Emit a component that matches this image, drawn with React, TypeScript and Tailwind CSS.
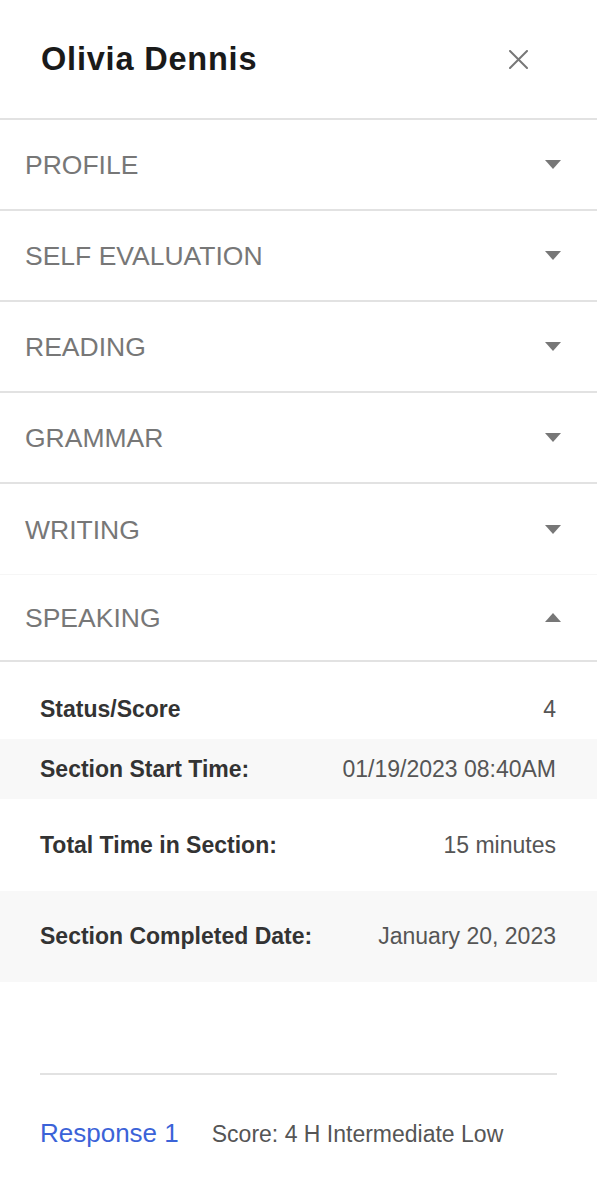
import { useState } from 'react';

const sections = ['PROFILE', 'SELF EVALUATION', 'READING', 'GRAMMAR', 'WRITING'];

const details = [
  { label: 'Status/Score', value: '4', h: 'h-[77px] pt-[18px]', shaded: false },
  { label: 'Section Start Time:', value: '01/19/2023 08:40AM', h: 'h-[60px]', shaded: true },
  { label: 'Total Time in Section:', value: '15 minutes', h: 'h-[92px]', shaded: false },
  { label: 'Section Completed Date:', value: 'January 20, 2023', h: 'h-[91px]', shaded: true },
];

function Caret({ up }: { up?: boolean }) {
  return (
    <svg width="16" height="9" viewBox="0 0 16 9" className="shrink-0">
      {up ? <path d="M8 0 L16 9 L0 9 Z" fill="#777" /> : <path d="M0 0 L16 0 L8 9 Z" fill="#777" />}
    </svg>
  );
}

export default function App() {
  const [open, setOpen] = useState('SPEAKING');

  return (
    <div className="min-h-screen w-full bg-white font-['Liberation_Sans',Arial,sans-serif]">
      <div className="flex h-[120px] items-center justify-between border-b-2 border-[#e2e2e2] pl-[41px] pr-[69px]">
        <h1 className="text-[32.5px] font-bold tracking-[0.8px] text-[#1a1a1a]">Olivia Dennis</h1>
        <button className="text-[#777]">
          <svg width="19" height="19" viewBox="0 0 19 19">
            <path d="M1 1 L18 18 M18 1 L1 18" stroke="#777" strokeWidth="2" strokeLinecap="round" />
          </svg>
        </button>
      </div>

      {sections.map((s, i) => (
        <button
          key={s}
          onClick={() => setOpen(open === s ? '' : s)}
          className={`flex h-[91px] w-full items-center justify-between pl-[25px] pr-[36px] ${
            i === sections.length - 1 ? 'border-b border-[#f6f6f6]' : 'border-b-2 border-[#e2e2e2]'
          }`}
        >
          <span className="pt-[3px] text-[26.5px] text-[#777]">{s}</span>
          <Caret up={open === s} />
        </button>
      ))}

      <button
        onClick={() => setOpen(open === 'SPEAKING' ? '' : 'SPEAKING')}
        className="flex h-[87px] w-full items-center justify-between border-b-2 border-[#e2e2e2] pl-[25px] pr-[36px]"
      >
        <span className="pt-[3px] text-[26.5px] text-[#777]">SPEAKING</span>
        <Caret up={open === 'SPEAKING'} />
      </button>

      {open === 'SPEAKING' && (
        <div>
          {details.map((d) => (
            <div
              key={d.label}
              className={`flex items-center justify-between pl-[40px] pr-[41px] ${d.h} ${d.shaded ? 'bg-[#f8f8f8]' : ''}`}
            >
              <span className="text-[23px] font-bold text-[#333]">{d.label}</span>
              <span className="text-[23px] text-[#555]">{d.value}</span>
            </div>
          ))}

          <div className="mx-[40px] mt-[91px] border-t-2 border-[#e2e2e2]" />

          <div className="flex items-baseline gap-[33px] px-[40px] pt-[39px]">
            <a href="#" className="text-[26px] text-[#3b63d8]">Response 1</a>
            <span className="text-[23px] text-[#555]">Score: 4 H Intermediate Low</span>
          </div>
        </div>
      )}
    </div>
  );
}
